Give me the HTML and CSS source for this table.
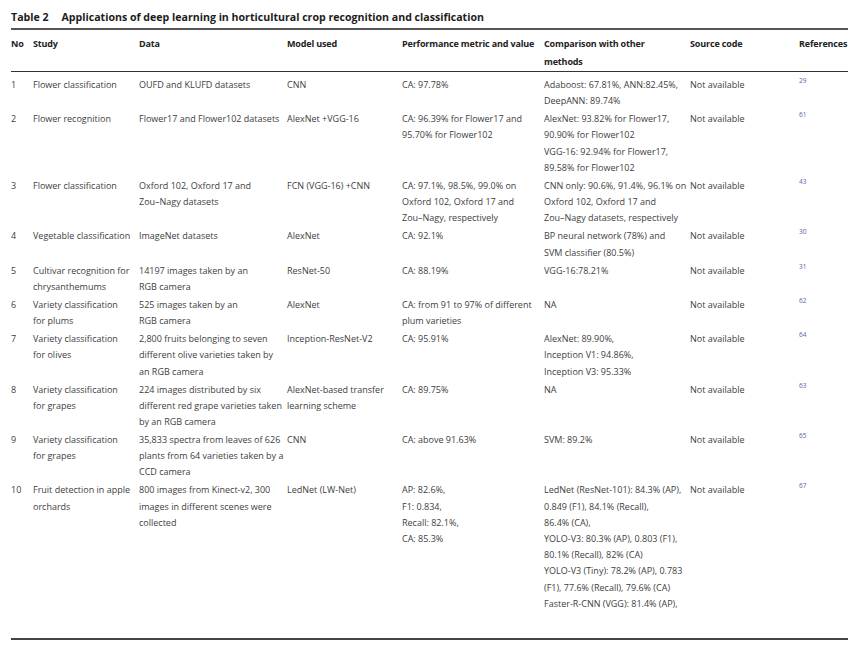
FILE: index.html
```html
<!DOCTYPE html>
<html lang="en">
<head>
<meta charset="utf-8">
<title>Table 2</title>
<link rel="stylesheet" href="styles.css">
</head>
<body>
<div class="page">
  <h1 class="caption"><span class="label">Table 2</span>Applications of deep learning in horticultural crop recognition and classification</h1>
  <table class="data">
    <colgroup>
      <col class="c-no"><col class="c-study"><col class="c-data"><col class="c-model"><col class="c-perf"><col class="c-comp"><col class="c-src"><col class="c-ref">
    </colgroup>
    <thead>
      <tr>
        <th>No</th><th>Study</th><th>Data</th><th>Model used</th><th>Performance metric and value</th><th>Comparison with other<br>methods</th><th>Source code</th><th>References</th>
      </tr>
    </thead>
    <tbody>
      <tr>
        <td>1</td><td>Flower classification</td><td>OUFD and KLUFD datasets</td><td>CNN</td><td>CA: 97.78%</td><td>Adaboost: 67.81%, ANN:82.45%,<br>DeepANN: 89.74%</td><td>Not available</td><td><span class="ref">29</span></td>
      </tr>
      <tr>
        <td>2</td><td>Flower recognition</td><td>Flower17 and Flower102 datasets</td><td>AlexNet +VGG-16</td><td>CA: 96.39% for Flower17 and<br>95.70% for Flower102</td><td>AlexNet: 93.82% for Flower17,<br>90.90% for Flower102<br>VGG-16: 92.94% for Flower17,<br>89.58% for Flower102</td><td>Not available</td><td><span class="ref">61</span></td>
      </tr>
      <tr>
        <td>3</td><td>Flower classification</td><td>Oxford 102, Oxford 17 and<br>Zou–Nagy datasets</td><td>FCN (VGG-16) +CNN</td><td>CA: 97.1%, 98.5%, 99.0% on<br>Oxford 102, Oxford 17 and<br>Zou–Nagy, respectively</td><td>CNN only: 90.6%, 91.4%, 96.1% on<br>Oxford 102, Oxford 17 and<br>Zou–Nagy datasets, respectively</td><td>Not available</td><td><span class="ref">43</span></td>
      </tr>
      <tr>
        <td>4</td><td>Vegetable classification</td><td>ImageNet datasets</td><td>AlexNet</td><td>CA: 92.1%</td><td>BP neural network (78%) and<br>SVM classifier (80.5%)</td><td>Not available</td><td><span class="ref">30</span></td>
      </tr>
      <tr>
        <td>5</td><td>Cultivar recognition for<br>chrysanthemums</td><td>14197 images taken by an<br>RGB camera</td><td>ResNet-50</td><td>CA: 88.19%</td><td>VGG-16:78.21%</td><td>Not available</td><td><span class="ref">31</span></td>
      </tr>
      <tr>
        <td>6</td><td>Variety classification<br>for plums</td><td>525 images taken by an<br>RGB camera</td><td>AlexNet</td><td>CA: from 91 to 97% of different<br>plum varieties</td><td>NA</td><td>Not available</td><td><span class="ref">62</span></td>
      </tr>
      <tr>
        <td>7</td><td>Variety classification<br>for olives</td><td>2,800 fruits belonging to seven<br>different olive varieties taken by<br>an RGB camera</td><td>Inception-ResNet-V2</td><td>CA: 95.91%</td><td>AlexNet: 89.90%,<br>Inception V1: 94.86%,<br>Inception V3: 95.33%</td><td>Not available</td><td><span class="ref">64</span></td>
      </tr>
      <tr>
        <td>8</td><td>Variety classification<br>for grapes</td><td>224 images distributed by six<br>different red grape varieties taken<br>by an RGB camera</td><td>AlexNet-based transfer<br>learning scheme</td><td>CA: 89.75%</td><td>NA</td><td>Not available</td><td><span class="ref">63</span></td>
      </tr>
      <tr>
        <td>9</td><td>Variety classification<br>for grapes</td><td>35,833 spectra from leaves of 626<br>plants from 64 varieties taken by a<br>CCD camera</td><td>CNN</td><td>CA: above 91.63%</td><td>SVM: 89.2%</td><td>Not available</td><td><span class="ref">65</span></td>
      </tr>
      <tr class="last">
        <td>10</td><td>Fruit detection in apple<br>orchards</td><td>800 images from Kinect-v2, 300<br>images in different scenes were<br>collected</td><td>LedNet (LW-Net)</td><td>AP: 82.6%,<br>F1: 0.834,<br>Recall: 82.1%,<br>CA: 85.3%</td><td>LedNet (ResNet-101): 84.3% (AP),<br>0.849 (F1), 84.1% (Recall),<br>86.4% (CA),<br>YOLO-V3: 80.3% (AP), 0.803 (F1),<br>80.1% (Recall), 82% (CA)<br>YOLO-V3 (Tiny): 78.2% (AP), 0.783<br>(F1), 77.6% (Recall), 79.6% (CA)<br>Faster-R-CNN (VGG): 81.4% (AP),</td><td>Not available</td><td><span class="ref">67</span></td>
      </tr>
    </tbody>
  </table>
</div>
</body>
</html>
```

FILE: styles.css
```css
html, body {
  margin: 0;
  padding: 0;
  background: #ffffff;
}

body {
  font-family: "Open Sans", "Noto Sans", sans-serif;
  color: #404040;
}

.page {
  width: 837px;
  padding: 9px 0 0 11px;
}

.caption {
  margin: 0;
  font-size: 10.6px;
  font-weight: 700;
  line-height: 16px;
  color: #1c1c1c;
  padding-bottom: 3px;
  border-bottom: 2px solid #555555;
}

.caption .label {
  margin-right: 13px;
}

.data {
  width: 837px;
  border-collapse: collapse;
  table-layout: fixed;
  border-bottom: 2px solid #444444;
}

.c-no { width: 22px; }
.c-study { width: 106px; }
.c-data { width: 148px; }
.c-model { width: 115px; }
.c-perf { width: 142px; }
.c-comp { width: 146px; }
.c-src { width: 109px; }
.c-ref { width: 49px; }

.data th {
  text-align: left;
  vertical-align: top;
  font-size: 9px;
  font-weight: 700;
  letter-spacing: -0.15px;
  line-height: 18px;
  color: #222222;
  padding: 5px 0 0 0;
  white-space: nowrap;
  border-bottom: 1px solid #333333;
}

.data td {
  vertical-align: top;
  font-size: 9px;
  line-height: 16.2px;
  padding: 1px 0 0.85px 0;
  white-space: nowrap;
}

.data tbody tr:first-child td {
  padding-top: 5px;
}

.data tr.last td {
  padding-bottom: 26px;
}

.ref {
  display: inline-block;
  vertical-align: top;
  font-size: 6.5px;
  line-height: 8px;
  color: #5a62aa;
}
```
